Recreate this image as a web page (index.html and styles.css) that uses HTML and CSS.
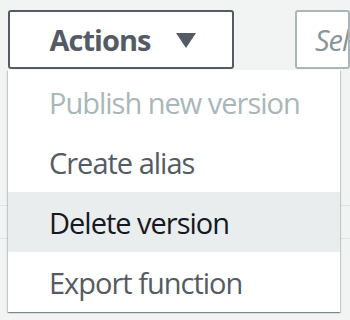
FILE: index.html
```html
<!DOCTYPE html>
<html>
<head>
<meta charset="utf-8">
<link rel="stylesheet" href="styles.css">
</head>
<body>
<div class="page">
  <div class="toolbar">
    <div class="actions-wrap">
      <button class="actions-btn">
        <span class="label">Actions</span>
        <svg class="caret" width="20" height="15" viewBox="0 0 20 15"><path d="M0 0 H20 L10 15 Z" fill="#545b64"/></svg>
      </button>
      <ul class="menu">
        <li class="item disabled">Publish new version</li>
        <li class="item">Create alias</li>
        <li class="item hover">Delete version</li>
        <li class="item">Export function</li>
      </ul>
    </div>
    <div class="select"><span class="placeholder">Select</span></div>
  </div>
  <div class="rows">
    <div class="row-line"></div>
    <div class="row-gap"></div>
    <div class="row-line"></div>
  </div>
</div>
</body>
</html>
```
FILE: styles.css
```css
html, body {
  margin: 0;
  padding: 0;
}
body {
  background: #f2f3f3;
  font-family: "Open Sans", "Noto Sans", sans-serif;
  width: 350px;
  height: 320px;
  overflow: hidden;
}
.page {
  position: relative;
}
.toolbar {
  display: flex;
  align-items: flex-start;
  padding: 10px 0 0 8px;
  gap: 61px;
}
.actions-wrap {
  position: relative;
}
.actions-btn {
  box-sizing: border-box;
  width: 226px;
  height: 59px;
  border: 2px solid #545b64;
  border-radius: 3px;
  background: #fff;
  display: flex;
  align-items: center;
  justify-content: center;
  gap: 26px;
  padding: 0 0 0 4px;
  font-family: inherit;
  font-weight: 700;
  font-size: 29px;
  letter-spacing: -1px;
  color: #545b64;
}
.label {
  line-height: 1;
}
.caret {
  display: block;
  margin-top: 1px;
}
.select {
  box-sizing: border-box;
  width: 120px;
  height: 59px;
  border: 2px solid #aab7b8;
  border-radius: 3px;
  background: #fff;
  display: flex;
  align-items: center;
  padding-left: 18px;
  white-space: nowrap;
  overflow: hidden;
}
.placeholder {
  font-style: italic;
  font-size: 29px;
  letter-spacing: -1px;
  color: #879596;
}
.menu {
  position: absolute;
  top: 60px;
  left: 0;
  z-index: 2;
  width: 332px;
  margin: 0;
  padding: 2px 0 0;
  list-style: none;
  background: #fff;
  box-shadow: 0 1px 1px 0 rgba(0,28,36,.3), 1px 1px 1px 0 rgba(0,28,36,.15), -1px 1px 1px 0 rgba(0,28,36,.15);
}
.item {
  height: 60px;
  display: flex;
  align-items: center;
  padding-left: 41px;
  font-size: 29px;
  letter-spacing: -1px;
  color: #545b64;
  white-space: nowrap;
}
.item.disabled {
  color: #aab7b8;
}
.item.hover {
  background: #eaeded;
  color: #16191f;
}
.rows {
  margin-top: 136px;
}
.row-line {
  height: 1px;
  background: #e1e4e4;
}
.row-gap {
  height: 32px;
}
```
